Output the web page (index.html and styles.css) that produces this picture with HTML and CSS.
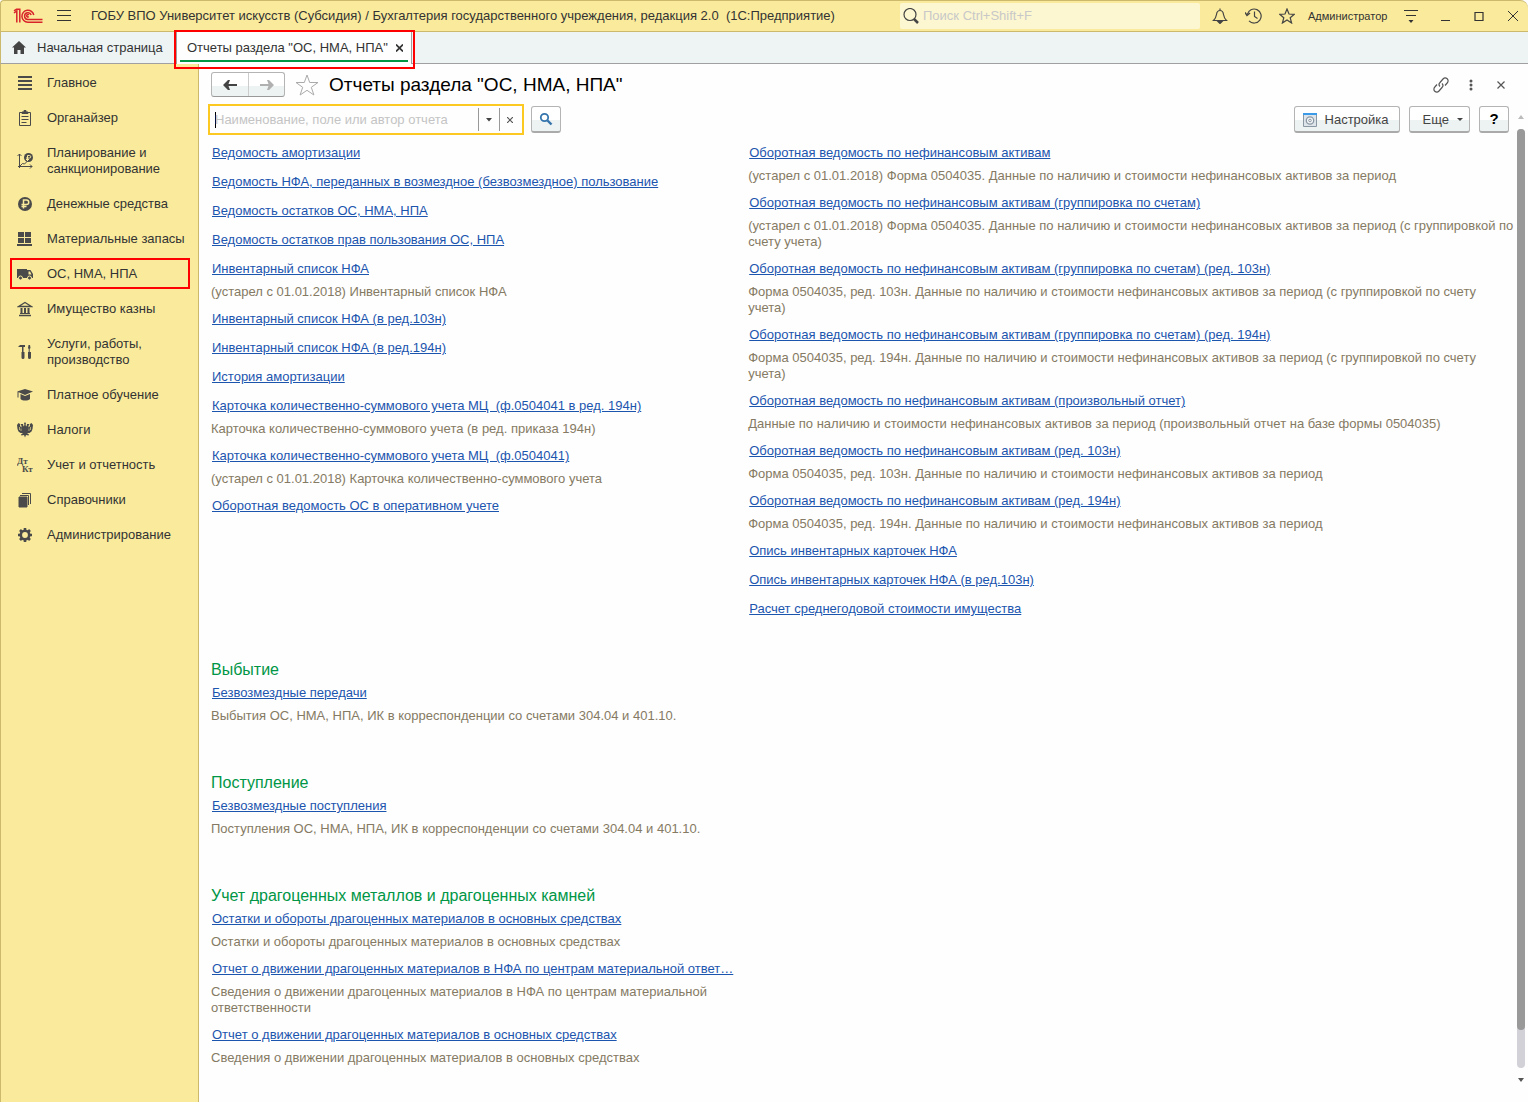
FILE: index.html
```html
<!DOCTYPE html>
<html lang="ru">
<head>
<meta charset="utf-8">
<meta name="viewport" content="width=device-width, initial-scale=1">
<title>Отчеты раздела "ОС, НМА, НПА"</title>
<link rel="stylesheet" href="styles.css">
</head>
<body>
<header class="titlebar">
  <svg class="logo" width="30" height="16" viewBox="0 0 30 16" fill="none" stroke="#d8232a" stroke-width="1.5"><path d="M1 5L3.800 3V14.500M1 2.800L3.500 1.200H6.800V14.500"/><path d="M20.800 7A6 6 0 1 0 14.800 14.200H29.500M18.200 7A3.400 3.400 0 1 0 14.800 11.500H29.500"/><path d="M15.800 7a1.200 1.200 0 1 0 0 1.500"/></svg>
  <button class="icon-btn menu-btn" aria-label="Меню"><svg width="14" height="12" viewBox="0 0 14 12" stroke="#333" stroke-width="1"><path d="M0 .5h14M0 5.500h14M0 10.500h14"/></svg></button>
  <div class="app-title">ГОБУ ВПО Университет искусств (Субсидия) / Бухгалтерия государственного учреждения, редакция 2.0&nbsp; (1С:Предприятие)</div>
  <label class="global-search">
    <svg width="16" height="16" viewBox="0 0 16 16" fill="none" stroke="#444"><circle cx="7" cy="6.500" r="6" stroke-width="1.200"/><path d="M11 11l4 4" stroke-width="2.500"/></svg>
    <input type="text" placeholder="Поиск Ctrl+Shift+F" aria-label="Поиск">
  </label>
  <div class="title-tools">
    <button class="icon-btn" aria-label="Уведомления"><svg width="16" height="16" viewBox="0 0 16 16" fill="none" stroke="#444" stroke-width="1.200"><path d="M1.500 12.500h13c-2-2-2.500-3-3-6C11.200 3.800 10 2.500 8 2.500S4.800 3.800 4.500 6.500c-.5 3-1 4-3 6zM8 .5v2"/><path d="M6 13.500h4l-2 2z" fill="#444"/></svg></button>
    <button class="icon-btn" aria-label="История"><svg width="17" height="16" viewBox="0 0 17 16" fill="none" stroke="#444" stroke-width="1.200"><path d="M2.300 6.500A7 7 0 1 1 4 12.800M9.500 3.500v5l3 2"/><path d="M0 4.500l2 3 3-2.500" stroke-width="1.500"/></svg></button>
    <button class="icon-btn" aria-label="Избранное"><svg width="16" height="16" viewBox="0 0 16 16" fill="none" stroke="#444" stroke-width="1.200"><path d="M8 1l2 5 5.300.3-4.100 3.400 1.400 5.300L8 12l-4.600 3 1.400-5.300L.7 6.300 6 6z"/></svg></button>
    <a class="user" href="#">Администратор</a>
    <button class="icon-btn" aria-label="Сервис"><svg width="14" height="13" viewBox="0 0 14 13" stroke="#333"><path d="M0 .5h14M2 5.500h10"/><path d="M4.500 10h5l-2.500 3z" fill="#333" stroke="none"/></svg></button>
  </div>
  <div class="window-tools">
    <button class="icon-btn" aria-label="Свернуть"><svg width="10" height="10" viewBox="0 0 10 10" stroke="#333"><path d="M1 9.500h9"/></svg></button>
    <button class="icon-btn" aria-label="Развернуть"><svg width="10" height="10" viewBox="0 0 10 10" fill="none" stroke="#333"><path d="M1 1.500h8v8H1z" stroke-width="1.200"/></svg></button>
    <button class="icon-btn" aria-label="Закрыть"><svg width="10" height="10" viewBox="0 0 10 10" stroke="#333"><path d="M0 0l10 10M10 0L0 10"/></svg></button>
  </div>
</header>

<nav class="tabs" aria-label="Открытые окна">
  <a class="tab home" href="#"><svg width="14" height="13" viewBox="0 0 14 13" fill="#444"><path d="M7 0l7 6.500h-2V13H8.500V9h-3v4H2V6.500H0z"/></svg>Начальная страница</a>
  <div class="tab active"><a class="tab-label" href="#">Отчеты раздела "ОС, НМА, НПА"</a><button class="icon-btn" aria-label="Закрыть вкладку"><svg width="7" height="8" viewBox="0 0 7 8" stroke="#333" stroke-width="1.700"><path d="M0 .5l7 7M7 .5l-7 7"/></svg></button></div>
</nav>

<div class="workspace">
  <nav class="sidebar" aria-label="Разделы">
    <a class="section" href="#"><svg width="16" height="16" viewBox="0 0 16 16" stroke="#4a4a4a" stroke-width="2"><path d="M1 2h14M1 6h14M1 10h14M1 14h14"/></svg>Главное</a>
    <a class="section" href="#"><svg width="16" height="16" viewBox="0 0 16 16" fill="none" stroke="#4a4a4a"><path d="M2.500 2.500h11v13h-11zM4.500 6.500h7M4.500 9.500h7M4.500 12.500h5"/><path d="M5 3.500V2h2V.5h2V2h2v1.500z" fill="#4a4a4a"/></svg>Органайзер</a>
    <a class="section" href="#"><svg width="16" height="16" viewBox="0 0 16 16" fill="none" stroke="#4a4a4a"><path d="M2.500 15V1M.5 3l2-2 2 2M1 13.500h14M13 11.500l2 2-2 2M2.500 13.500l3-3 2 .5 3-3"/><circle cx="11.500" cy="4.500" r="4.500" fill="#4a4a4a" stroke="none"/><path d="M10.500 8V2.500h2a1 1 0 0 1 0 2.500H9M9 6.500h3" stroke="#faeb9c"/></svg>Планирование и санкционирование</a>
    <a class="section" href="#"><svg width="16" height="16" viewBox="0 0 16 16" fill="none"><circle cx="8" cy="8" r="7" fill="#4a4a4a"/><path d="M6.500 12.500V4h3a2 2 0 0 1 0 4.500H4.500M4.500 10.500h5" stroke="#faeb9c" stroke-width="1.500"/></svg>Денежные средства</a>
    <a class="section" href="#"><svg width="16" height="16" viewBox="0 0 16 16" fill="#4a4a4a"><path d="M1 1h6v5H1zM8 1h6v5H8zM1 7h6v5H1zM8 7h6v5H8zM0 13h15v2H0z"/></svg>Материальные запасы</a>
    <a class="section current" href="#"><svg width="16" height="16" viewBox="0 0 16 16"><path d="M0 3h10v9H0zM10 4h3.500l2.500 4v4h-6z" fill="#4a4a4a"/><path d="M11.500 5.500H13l1.500 3h-3z" fill="#faeb9c"/><circle cx="3.500" cy="12" r="2" fill="#4a4a4a" stroke="#faeb9c"/><circle cx="12.500" cy="12" r="2" fill="#4a4a4a" stroke="#faeb9c"/></svg>ОС, НМА, НПА</a>
    <a class="section" href="#"><svg width="16" height="16" viewBox="0 0 16 16" fill="none" stroke="#4a4a4a"><path d="M1.500 5.500L8 1.500l6.500 4zM2 14.500h12" stroke-width="1.300"/><path d="M4.500 7v5M8 7v5M11.500 7v5" stroke-width="2"/><path d="M3 12.500h10"/></svg>Имущество казны</a>
    <a class="section" href="#"><svg width="16" height="16" viewBox="0 0 16 16" fill="#4a4a4a"><path d="M1 3l2-2h5v2H6.500v5H5V3zM4.500 8h3v5.500a1.500 1.500 0 0 1-3 0zM11.500 1h1.500l.5 3-.8 1v3h-1V5l-.7-1zM11 8h3v5.500a1.500 1.500 0 0 1-3 0z"/></svg>Услуги, работы, производство</a>
    <a class="section" href="#"><svg width="16" height="16" viewBox="0 0 16 16" fill="#4a4a4a"><path d="M0 4.500L8 2l8 2.500L8 8zM3.500 7L8 9l5-2v5c-2 2-7.500 2-9.500 0zM.5 5h1v5.500h-1z"/></svg>Платное обучение</a>
    <a class="section" href="#"><svg width="16" height="16" viewBox="0 0 16 16" fill="#4a4a4a"><path d="M8 0l1 1.500L8.500 3l1 1.500L10 2h2l.5 1-1 .5v2L13 4V2l1.500-1L16 3l-.5 4-1 2.500-2 1.500H10l2 1.500-.5 1L9 13l-1 2.500L7 13l-2.500.5-.5-1L6 11H3.500l-2-1.500-1-2.500L0 3l1.500-2L3 2v2l1.500 1.500v-2l-1-.5L4 2h2l.5 2.500 1-1.500L7 1.500z"/><path d="M2.500 5v3M4 6.500V9M13.500 5v3M12 6.500V9" stroke="#faeb9c" stroke-width=".6"/></svg>Налоги</a>
    <a class="section" href="#"><svg width="16" height="16" viewBox="0 0 16 16" fill="#4a4a4a" font-family="Liberation Serif, serif" font-weight="bold" font-size="9"><text x="0" y="7">Дт</text><text x="5" y="15">Кт</text></svg>Учет и отчетность</a>
    <a class="section" href="#"><svg width="16" height="16" viewBox="0 0 16 16" fill="none" stroke="#4a4a4a"><path d="M2 5h8v10H2z" fill="#4a4a4a"/><path d="M3 3.500h8.500V13M5 1.500h8.500V12"/></svg>Справочники</a>
    <a class="section" href="#"><svg width="16" height="16" viewBox="0 0 16 16" fill="none" stroke="#4a4a4a"><circle cx="8" cy="8" r="4.200" stroke-width="2.600"/><path d="M8 1v2.500M8 12.500V15M1 8h2.500M12.500 8H15M3 3l2 2M11 11l2 2M3 13l2-2M11 5l2-2" stroke-width="2.600"/></svg>Администрирование</a>
  </nav>

  <main class="page">
    <div class="page-head">
      <div class="history">
        <button aria-label="Назад"><svg width="14" height="10" viewBox="0 0 14 10" fill="#444"><path d="M0 5l5-5h2L5.500 4H14v2H5.500L7 10H5z"/></svg></button>
        <button aria-label="Вперед"><svg width="14" height="10" viewBox="0 0 14 10" fill="#b0b0b0"><path d="M14 5L9 0H7l1.500 4H0v2h8.500L7 10h2z"/></svg></button>
      </div>
      <button class="icon-btn" aria-label="В избранное"><svg width="24" height="22" viewBox="0 0 24 22" fill="none" stroke="#aaa"><path d="M12 1l2.700 7.500h8.300l-6.700 4.800 2.600 7.700-6.900-4.700L5.100 21l2.600-7.700L1 8.500h8.300z"/></svg></button>
      <h1>Отчеты раздела "ОС, НМА, НПА"</h1>
      <div class="page-tools">
        <button class="icon-btn" aria-label="Ссылка"><svg width="16" height="16" viewBox="0 0 16 16" fill="none" stroke="#555" stroke-width="1.200"><path d="M7 9.500c-1.500-1.500-1-3 0-4l3-3.500c1.200-1.300 3-1.300 4.200-.2s1.200 3 0 4.200l-2.200 2.500M9 6.500c1.500 1.500 1 3 0 4L6 14c-1.200 1.300-3 1.300-4.200.2s-1.200-3 0-4.200L4 7.500"/></svg></button>
        <button class="icon-btn" aria-label="Меню страницы"><svg width="4" height="12" viewBox="0 0 4 12" fill="#555"><circle cx="2" cy="2" r="1.500"/><circle cx="2" cy="6" r="1.500"/><circle cx="2" cy="10" r="1.500"/></svg></button>
        <button class="icon-btn" aria-label="Закрыть страницу"><svg width="8" height="8" viewBox="0 0 8 8" stroke="#555" stroke-width="1.200"><path d="M.5.5l7 7M7.500.5l-7 7"/></svg></button>
      </div>
    </div>

    <div class="toolbar">
      <div class="search-field">
        <input type="text" placeholder="Наименование, поле или автор отчета" aria-label="Поиск отчета">
        <button aria-label="Выбрать"><svg width="6" height="4" viewBox="0 0 6 4" fill="#444"><path d="M0 0h6L3 3.500z"/></svg></button>
        <button aria-label="Очистить"><svg width="6" height="6" viewBox="0 0 6 6" stroke="#555" stroke-width="1.200"><path d="M0 0l6 6M6 0L0 6"/></svg></button>
      </div>
      <button class="btn find" aria-label="Найти"><svg width="14" height="14" viewBox="0 0 14 14" fill="none" stroke="#3575ad"><circle cx="5.500" cy="5.500" r="3.700" stroke-width="1.800"/><path d="M8.500 8.500l4 4" stroke-width="2.400"/></svg></button>
      <div class="actions">
        <button class="btn"><svg width="14" height="14" viewBox="0 0 14 14" fill="none" stroke="#8a98a4"><path d="M.5.5h13v13H.5z" fill="#dde4ea"/><path d="M0 1h14" stroke="#3c9be8" stroke-width="2"/><circle cx="7" cy="7.500" r="3.700" fill="#f4f6f8" stroke-width="1.300"/><circle cx="7" cy="7.500" r="1.300"/></svg>Настройка</button>
        <button class="btn more">Еще<svg width="6" height="4" viewBox="0 0 6 4" fill="#444"><path d="M0 0h6L3 3z"/></svg></button>
        <button class="btn help" aria-label="Справка">?</button>
      </div>
    </div>

    <div class="columns">
      <ul class="reports">
        <li><a href="#">Ведомость амортизации</a></li>
        <li><a href="#">Ведомость НФА, переданных в возмездное (безвозмездное) пользование</a></li>
        <li><a href="#">Ведомость остатков ОС, НМА, НПА</a></li>
        <li><a href="#">Ведомость остатков прав пользования ОС, НПА</a></li>
        <li><a href="#">Инвентарный список НФА</a><p>(устарел с 01.01.2018) Инвентарный список НФА</p></li>
        <li><a href="#">Инвентарный список НФА (в ред.103н)</a></li>
        <li><a href="#">Инвентарный список НФА (в ред.194н)</a></li>
        <li><a href="#">История амортизации</a></li>
        <li><a href="#">Карточка количественно-суммового учета МЦ&nbsp; (ф.0504041 в ред. 194н)</a><p>Карточка количественно-суммового учета (в ред. приказа 194н)</p></li>
        <li><a href="#">Карточка количественно-суммового учета МЦ&nbsp; (ф.0504041)</a><p>(устарел с 01.01.2018) Карточка количественно-суммового учета</p></li>
        <li><a href="#">Оборотная ведомость ОС в оперативном учете</a></li>
      </ul>
      <ul class="reports">
        <li><a href="#">Оборотная ведомость по нефинансовым активам</a><p>(устарел с 01.01.2018) Форма 0504035. Данные по наличию и стоимости нефинансовых активов за период</p></li>
        <li><a href="#">Оборотная ведомость по нефинансовым активам (группировка по счетам)</a><p>(устарел с 01.01.2018) Форма 0504035. Данные по наличию и стоимости нефинансовых активов за период (с группировкой по счету учета)</p></li>
        <li><a href="#">Оборотная ведомость по нефинансовым активам (группировка по счетам) (ред. 103н)</a><p>Форма 0504035, ред. 103н. Данные по наличию и стоимости нефинансовых активов за период (с группировкой по счету учета)</p></li>
        <li><a href="#">Оборотная ведомость по нефинансовым активам (группировка по счетам) (ред. 194н)</a><p>Форма 0504035, ред. 194н. Данные по наличию и стоимости нефинансовых активов за период (с группировкой по счету учета)</p></li>
        <li><a href="#">Оборотная ведомость по нефинансовым активам (произвольный отчет)</a><p>Данные по наличию и стоимости нефинансовых активов за период (произвольный отчет на базе формы 0504035)</p></li>
        <li><a href="#">Оборотная ведомость по нефинансовым активам (ред. 103н)</a><p>Форма 0504035, ред. 103н. Данные по наличию и стоимости нефинансовых активов за период</p></li>
        <li><a href="#">Оборотная ведомость по нефинансовым активам (ред. 194н)</a><p>Форма 0504035, ред. 194н. Данные по наличию и стоимости нефинансовых активов за период</p></li>
        <li><a href="#">Опись инвентарных карточек НФА</a></li>
        <li><a href="#">Опись инвентарных карточек НФА (в ред.103н)</a></li>
        <li><a href="#">Расчет среднегодовой стоимости имущества</a></li>
      </ul>
    </div>

    <section class="group">
      <h2>Выбытие</h2>
      <ul class="reports">
        <li><a href="#">Безвозмездные передачи</a><p>Выбытия ОС, НМА, НПА, ИК в корреспонденции со счетами 304.04 и 401.10.</p></li>
      </ul>
    </section>
    <section class="group">
      <h2>Поступление</h2>
      <ul class="reports">
        <li><a href="#">Безвозмездные поступления</a><p>Поступления ОС, НМА, НПА, ИК в корреспонденции со счетами 304.04 и 401.10.</p></li>
      </ul>
    </section>
    <section class="group">
      <h2>Учет драгоценных металлов и драгоценных камней</h2>
      <ul class="reports">
        <li><a href="#">Остатки и обороты драгоценных материалов в основных средствах</a><p>Остатки и обороты драгоценных материалов в основных средствах</p></li>
        <li><a href="#">Отчет о движении драгоценных материалов в НФА по центрам материальной ответ…</a><p>Сведения о движении драгоценных материалов в НФА по центрам материальной ответственности</p></li>
        <li><a href="#">Отчет о движении драгоценных материалов в основных средствах</a><p>Сведения о движении драгоценных материалов в основных средствах</p></li>
      </ul>
    </section>
  </main>

  <div class="scrollbar" aria-hidden="true">
    <svg width="6" height="4" viewBox="0 0 6 4" fill="#bbb"><path d="M0 4h6L3 0z"/></svg>
    <div class="track"><div class="thumb"></div></div>
    <svg width="6" height="4" viewBox="0 0 6 4" fill="#555"><path d="M0 0h6L3 4z"/></svg>
  </div>
</div>
</body>
</html>
```
FILE: styles.css
```css
* {
  box-sizing: border-box;
}

body {
  margin: 0;
  min-height: 100vh;
  display: flex;
  flex-direction: column;
  background: #fefefe;
  color: #333;
  font: 13px/16px "Liberation Sans", Arial, sans-serif;
}

button,
input {
  font: inherit;
  color: inherit;
}

button {
  display: flex;
  align-items: center;
  justify-content: center;
  padding: 0;
  border: 0;
  background: none;
}

svg {
  display: block;
  flex: none;
}

a {
  color: inherit;
  text-decoration: none;
}

/* Window title bar */
.titlebar {
  display: flex;
  align-items: center;
  height: 32px;
  padding: 0 10px 0 12px;
  background: #faeb9c;
  border: 1px solid #ccb96c;
  border-right: 0;
  border-radius: 4px 8px 0 0;
}

.menu-btn {
  margin: 0 20px 0 14px;
}

.app-title {
  flex: 1;
  overflow: hidden;
  white-space: nowrap;
}

.global-search {
  display: flex;
  align-items: center;
  gap: 4px;
  width: 300px;
  height: 26px;
  padding-left: 3px;
  background: #fdf7d1;
  border-radius: 2px;
}

.global-search input {
  flex: 1;
  min-width: 0;
  padding: 0;
  border: 0;
  outline: 0;
  background: none;
}

.global-search input::placeholder {
  color: #c8c8c8;
}

.title-tools {
  display: flex;
  align-items: center;
  gap: 17px;
  margin-left: 12px;
}

.user {
  width: 82px;
  margin: 0 -3px 0 -4px;
  font-size: 11px;
  white-space: nowrap;
}

.window-tools {
  display: flex;
  gap: 24px;
  margin-left: 22px;
}

/* Open tabs */
.tabs {
  display: flex;
  height: 32px;
  background: #eef3f4;
  border-bottom: 1px solid #a0a0a0;
  border-left: 1px solid #ccb96c;
}

.tab {
  display: flex;
  align-items: center;
  white-space: nowrap;
}

.home {
  gap: 11px;
  width: 175px;
  padding-left: 11px;
}

.active {
  position: relative;
  gap: 8px;
  height: 32px;
  width: 236px;
  padding: 0 8px 0 10px;
  background: #fefefe;
  border: 1px solid #a0a0a0;
  border-width: 0 1px;
}

.active::before {
  content: "";
  position: absolute;
  inset: auto 3px 2px 3px;
  height: 2px;
  background: #009646;
}

.active::after {
  content: "";
  position: absolute;
  inset: -2px -4px -5px -3px;
  border: 2px solid #f00;
  pointer-events: none;
}

.tab-label {
  flex: 1;
}

/* Sections panel */
.workspace {
  flex: 1;
  display: flex;
}

.sidebar {
  flex: none;
  width: 199px;
  padding: 3px 8px;
  background: #faeb9c;
  border: 1px solid #ccb96c;
  border-width: 0 1px;
}

.section {
  display: flex;
  align-items: center;
  gap: 14px;
  margin-bottom: 4px;
  padding: 8px 5px 7px 8px;
}

.current {
  margin-left: 1px;
  padding: 6px 4px 5px 5px;
  border: 2px solid #f00;
}

/* Page */
.page {
  flex: 1;
  min-width: 0;
  padding: 7px 0 32px 12px;
}

.page-head {
  display: flex;
  align-items: center;
  gap: 10px;
  height: 27px;
}

.history {
  display: flex;
  height: 25px;
  border: 1px solid #b4b4b4;
  border-bottom-color: #999;
  border-radius: 3px;
  background: linear-gradient(#fff 55%, #edf2f2 55%);
}

.history button {
  width: 36px;
}

.history button + button {
  border-left: 1px solid #ccc;
}

h1 {
  margin: 0;
  color: #000;
  font-size: 19px;
  line-height: 24px;
  font-weight: 400;
}

.page-tools {
  display: flex;
  align-items: center;
  gap: 14px;
  margin: 0 5px 0 auto;
}

.page-tools button {
  width: 16px;
}

.toolbar {
  display: flex;
  align-items: center;
  gap: 7px;
  margin: 6px 5px 10px -3px;
}

.search-field {
  display: flex;
  align-items: stretch;
  width: 316px;
  height: 31px;
  padding: 2px;
  padding-left: 5px;
  border: 2px solid #fbc922;
}

/* The field is shown focused, with a text cursor at its start */
.search-field input {
  flex: 1;
  min-width: 0;
  padding: 0;
  border: 0;
  outline: 0;
  background: linear-gradient(#000, #000) left center / 1px 16px no-repeat;
}

.search-field input::placeholder {
  color: #c4c4c4;
}

.search-field button {
  width: 21px;
  border-left: 1px solid #999;
}

.btn {
  gap: 8px;
  height: 27px;
  padding: 1px 10px 0 8px;
  border: 1px solid #b4b4b4;
  border-bottom: 2px solid #aaa;
  border-radius: 3px;
  background: linear-gradient(#fff 55%, #edf2f2 55%);
  color: #444;
}

.find {
  width: 30px;
  padding: 0;
}

.actions {
  display: flex;
  gap: 9px;
  margin-left: auto;
}

.more {
  padding: 1px 6px 0 13px;
}

.help {
  width: 30px;
  padding: 0;
  color: #000;
  font-size: 15px;
  font-weight: 700;
}

/* Report lists */
.columns {
  display: grid;
  grid-template-columns: 40% 1fr;
  gap: 16px;
  margin-bottom: 44px;
}

.reports {
  margin: 0;
  padding: 0;
  list-style: none;
}

.reports li {
  margin-bottom: 13px;
}

.reports li:has(p) {
  margin-bottom: 11px;
}

.reports li:last-child:last-child {
  margin-bottom: 0;
}

.reports a {
  display: block;
  width: fit-content;
  padding-left: 1px;
  color: #1c55ae;
  text-decoration: underline;
  white-space: nowrap;
}

.reports p {
  margin: 7px 0 0;
  color: #857a63;
}

.group {
  width: 40%;
}

.group + .group {
  margin-top: 50px;
}

.group h2 {
  margin: 0 0 6px;
  color: #009646;
  font-size: 16px;
  line-height: 18px;
  font-weight: 400;
}

/* Vertical scroll bar */
.scrollbar {
  flex: none;
  display: flex;
  flex-direction: column;
  align-items: center;
  gap: 10px;
  width: 14px;
  padding: 51px 0 20px;
}

.track {
  flex: 1;
  width: 8px;
  border-radius: 4px;
  background: #d2d1d7;
}

.thumb {
  height: 96%;
  border-radius: 4px;
  background: #999;
}
```
